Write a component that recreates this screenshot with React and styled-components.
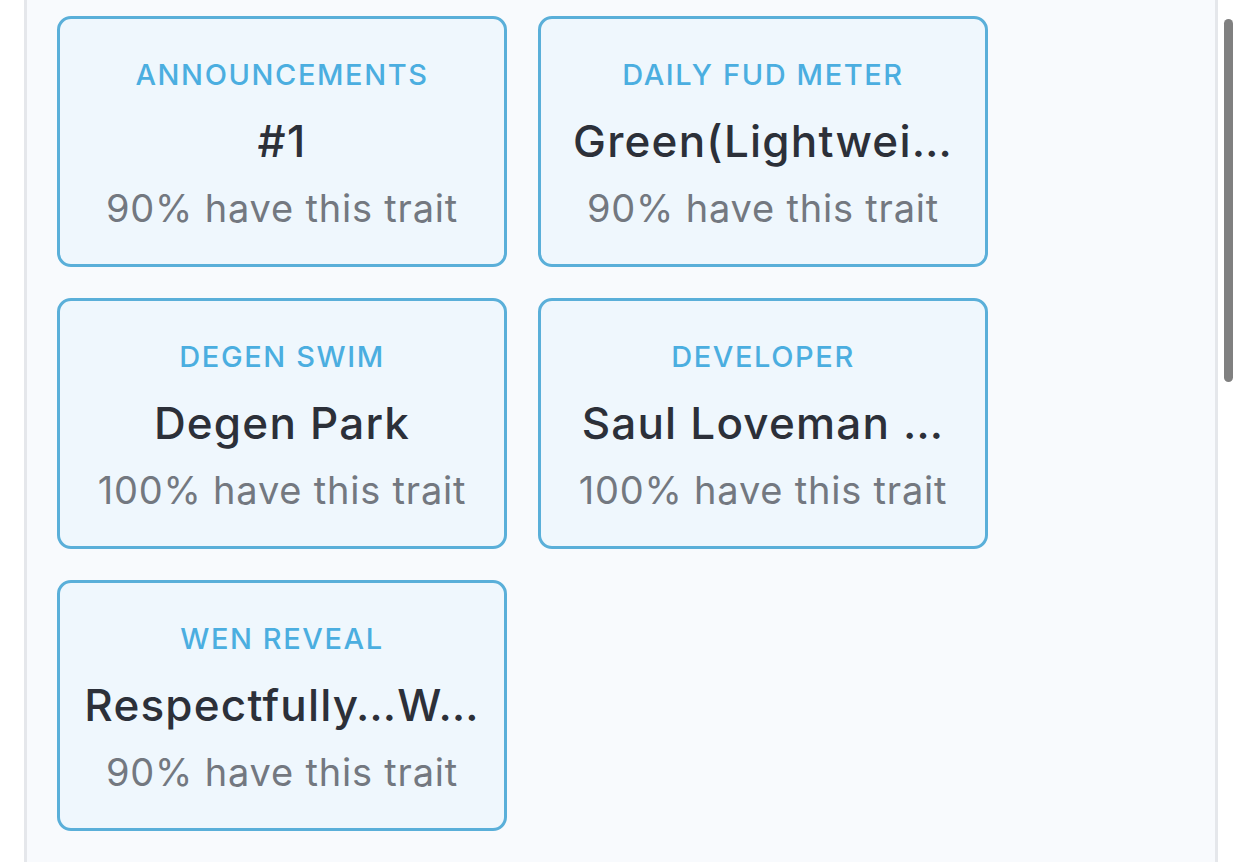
import React from "react";
import styled, { createGlobalStyle } from "styled-components";

const traits = [
    { type: "Announcements", value: "#1", share: "90%" },
    { type: "Daily FUD Meter", value: "Green(Lightwei…", share: "90%" },
    { type: "Degen Swim", value: "Degen Park", share: "100%" },
    { type: "Developer", value: "Saul Loveman …", share: "100%" },
    { type: "Wen Reveal", value: "Respectfully…W…", share: "90%" },
];

export default function App() {
    return (
        <>
            <GlobalStyle />
            <Page>
                <Gutter />
                <Panel>
                    <TraitGrid>
                        {traits.map((trait) => (
                            <TraitCard key={trait.type}>
                                <TraitType>{trait.type}</TraitType>
                                <TraitValue>{trait.value}</TraitValue>
                                <TraitShare>{trait.share} have this trait</TraitShare>
                            </TraitCard>
                        ))}
                    </TraitGrid>
                </Panel>
                <ScrollTrack>
                    <ScrollThumb />
                </ScrollTrack>
            </Page>
        </>
    );
}

const GlobalStyle = createGlobalStyle`
  html, body {
    margin: 0;
    padding: 0;
    background: #ffffff;
    overflow: hidden;
  }
`;

const Page = styled.div`
  display: flex;
  height: 862px;
  font-family: Inter, "Noto Sans", sans-serif;
`;

const Gutter = styled.div`
  width: 24px;
  flex-shrink: 0;
`;

const Panel = styled.main`
  width: 1194px;
  flex-shrink: 0;
  box-sizing: border-box;
  background: #f8fafd;
  border-left: 3px solid #e5e7eb;
  border-right: 3px solid #e5e7eb;
  padding: 16px 0 0 30px;
`;

const TraitGrid = styled.div`
  display: grid;
  grid-template-columns: repeat(2, 450px);
  gap: 31px;
`;

const TraitCard = styled.div`
  box-sizing: border-box;
  height: 251px;
  padding: 36px 16px 0;
  display: flex;
  flex-direction: column;
  align-items: center;
  background: #eff7fd;
  border: 3px solid #5aafd9;
  border-radius: 14px;
  text-align: center;
`;

const TraitType = styled.div`
  font-size: 29px;
  line-height: 40px;
  font-weight: 500;
  letter-spacing: 1.6px;
  text-transform: uppercase;
  color: #4baee0;
`;

const TraitValue = styled.div`
  margin-top: 18px;
  max-width: 100%;
  font-size: 44px;
  line-height: 56px;
  font-weight: 500;
  letter-spacing: 1.2px;
  color: #2c3039;
  white-space: nowrap;
  overflow: hidden;
  text-overflow: ellipsis;
`;

const TraitShare = styled.div`
  margin-top: 14px;
  font-size: 38px;
  line-height: 50px;
  font-weight: 400;
  letter-spacing: 0.8px;
  color: #737880;
`;

const ScrollTrack = styled.div`
  flex: 1;
  padding: 19px 0 0 6px;
`;

const ScrollThumb = styled.div`
  width: 9px;
  height: 363px;
  border-radius: 5px;
  background: #808080;
`;
